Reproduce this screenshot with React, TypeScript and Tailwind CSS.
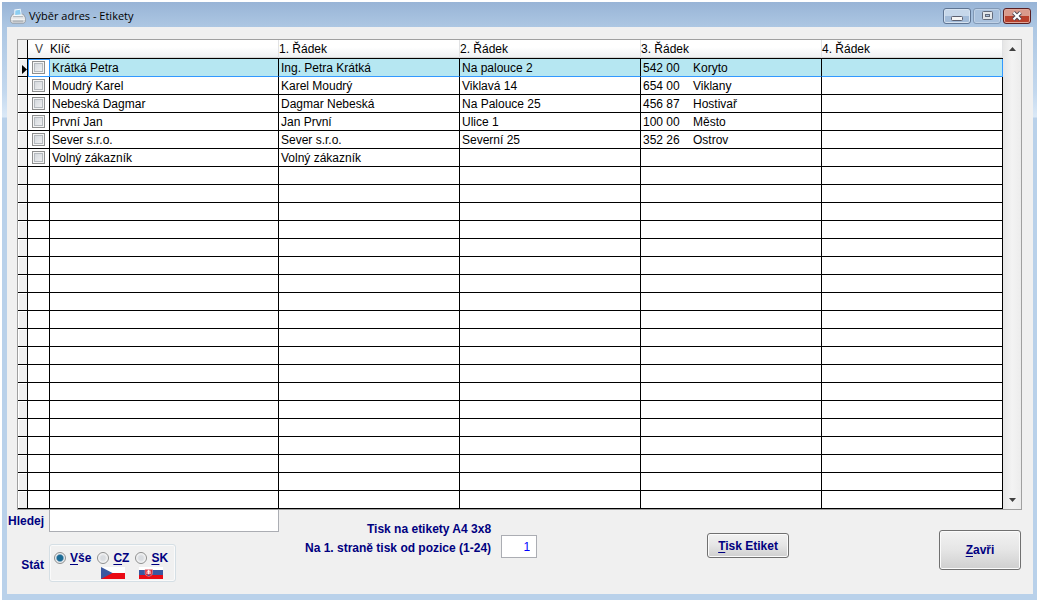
import React, { useState } from "react";

type Address = {
  key: string;
  line1: string;
  line2?: string;
  zip?: string;
  city?: string;
};

type Country = "all" | "cz" | "sk";

const ROW_COUNT = 25;

const addresses: Address[] = [
  { key: "Krátká Petra", line1: "Ing. Petra Krátká", line2: "Na palouce 2", zip: "542 00", city: "Koryto" },
  { key: "Moudrý Karel", line1: "Karel Moudrý", line2: "Viklavá 14", zip: "654 00", city: "Viklany" },
  { key: "Nebeská Dagmar", line1: "Dagmar Nebeská", line2: "Na Palouce 25", zip: "456 87", city: "Hostivař" },
  { key: "První Jan", line1: "Jan První", line2: "Ulice 1", zip: "100 00", city: "Město" },
  { key: "Sever s.r.o.", line1: "Sever s.r.o.", line2: "Severní 25", zip: "352 26", city: "Ostrov" },
  { key: "Volný zákazník", line1: "Volný zákazník" },
];

const PrinterIcon = () => (
  <svg width="16" height="16" viewBox="0 0 16 16" aria-hidden="true">
    <path d="M2.600 6.200h10.800L15.600 10v3.600L13.800 15.300H2.200L.4 13.600V10z" fill="#d3d6d9" stroke="#8b9299" strokeWidth=".7" />
    <path d="M3.200 6.800h9.600l1.900 3.200H1.300z" fill="#eceeef" />
    <path d="M4.400 1.600 10.600.8 11.800 7.400 4.200 8z" fill="#f6fbfe" />
    <path d="M5.300 2.400 10 1.800l.8 4.700-5.600.4z" fill="#8ccdf0" />
    <path d="M3.400 8h9.400l.6 1.300H2.800z" fill="#b4b9bd" />
    <path d="M1.100 10.500h13.800v1.300H1.100z" fill="#fafafa" />
    <path d="M3 12.600h10v1.100H3z" fill="#a5abb0" />
  </svg>
);

const CzechFlag = () => (
  <svg width="24" height="12" viewBox="0 0 24 12" className="block" aria-hidden="true">
    <path d="M0 0h24v6H0z" fill="#fff" />
    <path d="M0 6h24v6H0z" fill="#ea0a14" />
    <path d="M0 0 11.5 6 0 12z" fill="#3a57a0" />
  </svg>
);

const SlovakFlag = () => (
  <svg width="24" height="12" viewBox="0 0 24 12" className="block" aria-hidden="true">
    <path d="M0 0h24v3H0z" fill="#fff" />
    <path d="M0 3h24v5H0z" fill="#3a57a0" />
    <path d="M0 8h24v4H0z" fill="#ea0a14" />
    <path d="M6 2.500h7.500v4q0 2-3.700 3Q6 8.500 6 6.500z" fill="#e0252f" stroke="#e9a9b4" strokeWidth=".5" />
    <path d="M9.700 2.800v4.700M7.700 4.200h4M7.200 6h5" stroke="#fff" strokeWidth="1" />
    <path d="M7.600 8q2.100-1.200 4.200 0l-2 1z" fill="#3a57a0" />
  </svg>
);

type CaptionButtonProps = {
  label: string;
  className: string;
  children: React.ReactNode;
};

const CaptionButton: React.FC<CaptionButtonProps> = ({ label, className, children }) => (
  <button
    type="button"
    aria-label={label}
    className={`flex h-4 w-7 items-center justify-center rounded-[3px] border ${className}`}
  >
    {children}
  </button>
);

const TitleBar = () => (
  <header className="flex items-center pt-1.5 pr-1.5 pb-[3px] pl-2">
    <PrinterIcon />
    <h1 className="ml-[3px] flex-1 font-['Open_Sans',sans-serif] text-[11px] leading-4 text-black">
      Výběr adres - Etikety
    </h1>
    <div className="flex gap-0.5">
      <CaptionButton
        label="Minimalizovat"
        className="border-[#5f7593] bg-linear-to-b from-[#c6d7ea] from-50% to-[#a3bcd9] to-50% shadow-[inset_0_0_0_1px_#d5e2f0]"
      >
        <svg width="12" height="14" viewBox="0 0 12 14" aria-hidden="true">
          <rect x=".5" y="7.500" width="11" height="4" rx="1" fill="#f5f5f5" stroke="#5c6070" />
        </svg>
      </CaptionButton>
      <CaptionButton
        label="Maximalizovat"
        className="border-[#8299b6] bg-[#a9c1dd] shadow-[inset_0_0_0_1px_#bfd1e6]"
      >
        <svg width="11" height="10" viewBox="0 0 11 10" aria-hidden="true">
          <rect x=".5" y=".5" width="10" height="8" rx="1" fill="#e2e6ea" stroke="#626b7c" />
          <rect x="3.500" y="3.500" width="4" height="2" fill="#a9c1dd" stroke="#626b7c" />
        </svg>
      </CaptionButton>
      <CaptionButton
        label="Zavřít okno"
        className="border-[#5a1f22] bg-linear-to-b from-[#d99a8c] from-50% to-[#b9402c] to-50% shadow-[inset_0_0_0_1px_#e0a698]"
      >
        <svg width="12" height="10" viewBox="0 0 12 10" aria-hidden="true">
          <path d="m2.500 1.500 7 7m0-7-7 7" stroke="#4f4a58" strokeWidth="4" />
          <path d="m2.500 1.500 7 7m0-7-7 7" stroke="#fff" strokeWidth="2" />
        </svg>
      </CaptionButton>
    </div>
  </header>
);

const ScrollBar = () => (
  <div className="flex w-[18px] shrink-0 flex-col justify-between bg-linear-to-r from-[#e6e6e6] via-[#f3f3f3] to-[#ececec]">
    <button type="button" aria-label="Nahoru" className="flex h-[18px] items-center justify-center">
      <svg width="7" height="4" viewBox="0 0 7 4" aria-hidden="true">
        <path d="M3.500 0 7 4H0z" fill="#404040" />
      </svg>
    </button>
    <button type="button" aria-label="Dolů" className="flex h-[18px] items-center justify-center">
      <svg width="7" height="4" viewBox="0 0 7 4" aria-hidden="true">
        <path d="M3.500 4 7 0H0z" fill="#404040" />
      </svg>
    </button>
  </div>
);

const headClass =
  "border-b border-black bg-linear-to-b from-white from-40% to-[#eeeff1] p-0 text-left font-normal shadow-[inset_-1px_0_0_#e1e2e4,inset_0_-1px_0_#d5d5d5]";

const AddressTable = () => {
  const rows = Array.from({ length: ROW_COUNT }, (_, i) => addresses[i]);

  return (
    <div className="flex border border-[#a0a0a0]">
      <table className="w-full flex-1 table-fixed border-separate border-spacing-0 bg-white text-[12px] leading-[15px] text-black">
        <colgroup>
          <col className="w-[10px]" />
          <col className="w-[22px]" />
          <col className="w-[229px]" />
          <col />
          <col />
          <col />
          <col />
        </colgroup>
        <thead>
          <tr className="h-[19px] leading-[18px]">
            <td className="border-r border-b border-black bg-[#f0f0f0] p-0" />
            <th className="border-b border-black bg-linear-to-b from-white from-40% to-[#eeeff1] p-0 text-center font-normal text-[#404040]">
              V
            </th>
            <th className={headClass}>Klíč</th>
            <th className={headClass}>1. Řádek</th>
            <th className={headClass}>2. Řádek</th>
            <th className={headClass}>3. Řádek</th>
            <th className={headClass}>4. Řádek</th>
          </tr>
        </thead>
        <tbody>
          {rows.map((row, i) => {
            const active = i === 0;
            const cell = active
              ? "overflow-hidden whitespace-nowrap border-r border-b border-r-black border-b-[#3399ff] bg-[#b6e7f2] p-0 pt-0.5 pl-0.5 last:border-r-[#3399ff]"
              : "overflow-hidden whitespace-nowrap border-r border-b border-black p-0 pt-0.5 pl-0.5";

            return (
              <tr key={i} className="h-[18px]">
                <td className="border-r border-b border-black bg-[#f0f0f0] p-0 shadow-[inset_1px_1px_0_#ffffff]">
                  {active && (
                    <svg width="5" height="9" viewBox="0 0 5 9" className="mt-[3px] ml-auto block" aria-hidden="true">
                      <path d="M0 0 5 4.500 0 9z" fill="#000" />
                    </svg>
                  )}
                </td>
                <td
                  className={
                    active
                      ? "border-r border-b border-[#3399ff] p-0 shadow-[inset_1px_1px_0_#3399ff]"
                      : "border-r border-b border-black p-0"
                  }
                >
                  {row && (
                    <input
                      type="checkbox"
                      aria-label={row.key}
                      className="mx-auto block size-[13px] appearance-none border border-[#8e8f8f] bg-linear-to-br from-[#cdd2d8] to-[#f6f6f6] shadow-[inset_0_0_0_1px_#f4f4f4,inset_0_0_0_2px_#b5babf] checked:from-[#3a6ea5]"
                    />
                  )}
                </td>
                <td className={cell}>{row?.key}</td>
                <td className={cell}>{row?.line1}</td>
                <td className={cell}>{row?.line2}</td>
                <td className={cell}>
                  {row?.zip && (
                    <div className="flex">
                      <span className="w-[50px]">{row.zip}</span>
                      <span>{row.city}</span>
                    </div>
                  )}
                </td>
                <td className={cell} />
              </tr>
            );
          })}
        </tbody>
      </table>
      <ScrollBar />
    </div>
  );
};

type CountryOptionProps = {
  value: Country;
  selected: Country;
  onSelect: (value: Country) => void;
  hotkey: string;
  rest: string;
  flag?: React.ReactNode;
};

const CountryOption: React.FC<CountryOptionProps> = ({ value, selected, onSelect, hotkey, rest, flag }) => (
  <div>
    <label className="flex items-center gap-1 leading-4">
      <input
        type="radio"
        name="country"
        checked={selected === value}
        onChange={() => onSelect(value)}
        className="size-3 appearance-none rounded-full border border-[#8e8f8f] bg-radial from-[#d9dce0] from-30% to-[#f8f8f8] to-70% checked:from-[#1b6c96] checked:from-40% checked:to-[#e9eef1] checked:to-60%"
      />
      <span>
        <span className="underline underline-offset-2">{hotkey}</span>
        {rest}
      </span>
    </label>
    {flag && <div className="mt-px ml-1">{flag}</div>}
  </div>
);

const buttonClass =
  "rounded-[3px] border border-[#707070] bg-linear-to-b from-[#f2f2f2] from-0% via-[#e6e6e6] via-48% to-[#cfcfcf] font-bold shadow-[inset_0_0_0_1px_#fbfbfb]";

const App: React.FC = () => {
  const [country, setCountry] = useState<Country>("all");

  return (
    <div className="bg-white p-0.5 font-['Liberation_Sans',Arial,sans-serif] text-[12px]">
      <div className="bg-[linear-gradient(to_bottom,#98b4d6_0px,#adc7e3_25px,#c3d8ee_90px,#dbe9f7_115px,#b9d1ea_116px)]">
        <TitleBar />
        <main className="mr-1 ml-[5px] bg-[#f0f0f0] pt-3">
          <div className="pr-[11px] pl-2.5">
            <AddressTable />
          </div>

          <div className="flex items-start pr-3 pb-3 font-bold text-[#000080]">
            {/* Search and country filter */}
            <div className="grid grid-cols-[37px_230px] items-center gap-x-[5px] gap-y-3">
              <label htmlFor="search" className="text-right">
                Hledej
              </label>
              <input
                id="search"
                type="text"
                className="h-[22px] w-full border border-t-0 border-[#abadb3] bg-white px-1 font-normal outline-none"
              />
              <span id="country-label" className="pt-1 text-right">
                Stát
              </span>
              <div
                role="radiogroup"
                aria-labelledby="country-label"
                className="flex h-[38px] w-[127px] items-start gap-1.5 rounded-[3px] border border-[#d5dfe5] px-1 pt-[5px] shadow-[inset_0_0_0_1px_#fafafa]"
              >
                <CountryOption value="all" selected={country} onSelect={setCountry} hotkey="V" rest="še" />
                <CountryOption value="cz" selected={country} onSelect={setCountry} hotkey="C" rest="Z" flag={<CzechFlag />} />
                <CountryOption value="sk" selected={country} onSelect={setCountry} hotkey="S" rest="K" flag={<SlovakFlag />} />
              </div>
            </div>

            {/* Label sheet position */}
            <div className="mt-2.5 ml-[26px] flex items-end gap-2.5">
              <label htmlFor="position" className="text-right leading-[19px] whitespace-nowrap">
                Tisk na etikety A4 3x8
                <br />
                Na 1. straně tisk od pozice (1-24)
              </label>
              <input
                id="position"
                type="text"
                inputMode="numeric"
                defaultValue="1"
                className="h-[23px] w-9 border border-[#abadb3] bg-white pr-1.5 text-right font-normal text-[#0000ff] outline-none"
              />
            </div>

            <button type="button" className={`mt-[23px] ml-[170px] h-[25px] w-[82px] shrink-0 ${buttonClass}`}>
              <span className="underline underline-offset-2">T</span>isk Etiket
            </button>
            <button type="button" className={`mt-5 ml-auto h-10 w-[82px] shrink-0 ${buttonClass}`}>
              <span className="underline underline-offset-2">Z</span>avři
            </button>
          </div>
        </main>
        <div className="h-1.5" />
      </div>
    </div>
  );
};

export default App;
